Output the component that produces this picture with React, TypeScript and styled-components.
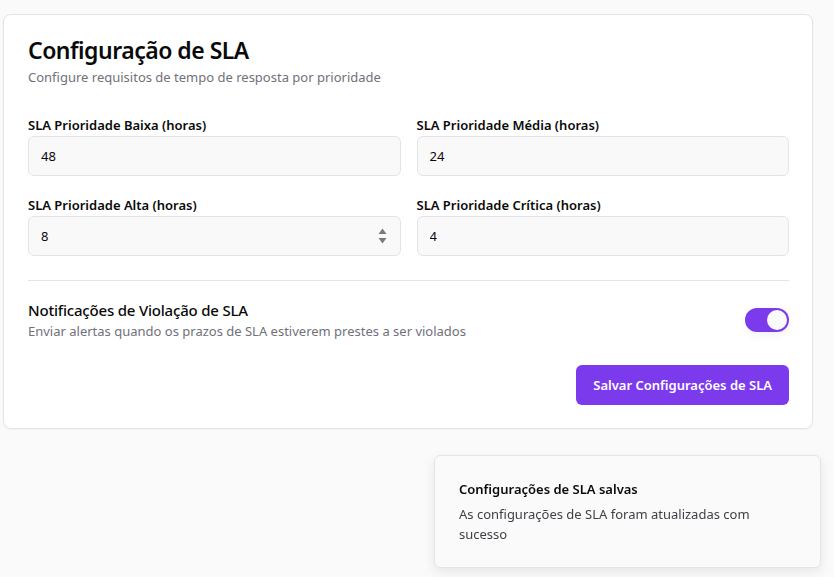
import React from "react";
import styled, { createGlobalStyle } from "styled-components";

const Global = createGlobalStyle`
  html, body { margin: 0; padding: 0; background: #fafafa; }
  body { font-family: "Noto Sans", "Open Sans", sans-serif; color: #0a0a0a; }
  * { box-sizing: border-box; }
`;

const Page = styled.div`
  padding: 14px 21px 0 3px;
  min-height: 577px;
`;

const Card = styled.section`
  background: #fff;
  border: 1px solid #e4e4e7;
  border-radius: 8px;
  box-shadow: 0 1px 2px rgba(0,0,0,0.04);
  padding: 19px 23px 23px 24px;
  display: flex;
  flex-direction: column;
`;

const Title = styled.h1`
  margin: 0;
  font-size: 23px;
  font-weight: 600;
  line-height: 32px;
  letter-spacing: -0.5px;
`;

const Subtitle = styled.p`
  margin: 2px 0 0;
  font-size: 13px;
  line-height: 18px;
  color: #71717a;
`;

const Grid = styled.div`
  display: grid;
  grid-template-columns: 1fr 1fr;
  column-gap: 16px;
  row-gap: 21px;
  margin-top: 31px;
`;

const Field = styled.div`
  display: flex;
  flex-direction: column;
  gap: 3px;
`;

const Label = styled.label`
  font-size: 13px;
  font-weight: 600;
  line-height: 16px;
`;

const InputWrap = styled.div`
  position: relative;
`;

const Input = styled.input`
  width: 100%;
  height: 40px;
  border: 1px solid #e4e4e7;
  border-radius: 6px;
  background: #f9f9fa;
  padding: 0 12px;
  font-family: inherit;
  font-size: 13px;
  color: #0a0a0a;
  outline: none;
`;

const Spinner = styled.svg`
  position: absolute;
  right: 14px;
  top: 50%;
  transform: translateY(-50%);
`;

const Divider = styled.hr`
  border: 0;
  border-top: 1px solid #e4e4e7;
  margin: 24px 0 19px;
`;

const Row = styled.div`
  display: flex;
  align-items: center;
  justify-content: space-between;
`;

const RowText = styled.div`
  display: flex;
  flex-direction: column;
`;

const RowTitle = styled.div`
  font-size: 15px;
  font-weight: 500;
  line-height: 20px;
  letter-spacing: -0.2px;
`;

const RowDesc = styled.div`
  font-size: 13px;
  line-height: 18px;
  color: #71717a;
  margin-top: 2px;
`;

const Toggle = styled.div<{ $on: boolean }>`
  width: 44px;
  height: 24px;
  border-radius: 12px;
  background: ${p => (p.$on ? "#7c3aed" : "#e4e4e7")};
  padding: 2px;
  display: flex;
  justify-content: ${p => (p.$on ? "flex-end" : "flex-start")};
  box-shadow: 0 3px 10px rgba(0,0,0,0.06);
`;

const Knob = styled.div`
  width: 20px;
  height: 20px;
  border-radius: 50%;
  background: #fafafa;
`;

const Actions = styled.div`
  display: flex;
  justify-content: flex-end;
  margin-top: 25px;
`;

const Button = styled.button`
  height: 40px;
  padding: 0 17px;
  border: 0;
  border-radius: 6px;
  background: #7c3aed;
  color: #fff;
  font-family: inherit;
  font-size: 13px;
  font-weight: 600;
`;

const Toast = styled.div`
  position: fixed;
  right: 13px;
  bottom: 9px;
  width: 387px;
  background: #fafafa;
  border: 1px solid #e4e4e7;
  border-radius: 6px;
  box-shadow: 0 4px 12px rgba(0,0,0,0.08);
  padding: 23px 40px 23px 24px;
`;

const ToastTitle = styled.div`
  font-size: 13px;
  font-weight: 600;
  line-height: 20px;
`;

const ToastDesc = styled.div`
  font-size: 13px;
  line-height: 20px;
  color: #3f3f46;
  margin-top: 5px;
`;

const fields = [
  { label: "SLA Prioridade Baixa (horas)", value: "48" },
  { label: "SLA Prioridade Média (horas)", value: "24" },
  { label: "SLA Prioridade Alta (horas)", value: "8", spin: true },
  { label: "SLA Prioridade Crítica (horas)", value: "4" },
];

export default function App() {
  return (
    <Page>
      <Global />
      <Card>
        <Title>Configuração de SLA</Title>
        <Subtitle>Configure requisitos de tempo de resposta por prioridade</Subtitle>
        <Grid>
          {fields.map(f => (
            <Field key={f.label}>
              <Label>{f.label}</Label>
              <InputWrap>
                <Input defaultValue={f.value} />
                {f.spin && (
                  <Spinner width="9" height="16" viewBox="0 0 9 16">
                    <path d="M4.5 0.5 L8.5 6 L0.5 6 Z" fill="#7a7a7a" />
                    <path d="M4.5 15.5 L8.5 10 L0.5 10 Z" fill="#7a7a7a" />
                  </Spinner>
                )}
              </InputWrap>
            </Field>
          ))}
        </Grid>
        <Divider />
        <Row>
          <RowText>
            <RowTitle>Notificações de Violação de SLA</RowTitle>
            <RowDesc>Enviar alertas quando os prazos de SLA estiverem prestes a ser violados</RowDesc>
          </RowText>
          <Toggle $on>
            <Knob />
          </Toggle>
        </Row>
        <Actions>
          <Button>Salvar Configurações de SLA</Button>
        </Actions>
      </Card>
      <Toast>
        <ToastTitle>Configurações de SLA salvas</ToastTitle>
        <ToastDesc>As configurações de SLA foram atualizadas com sucesso</ToastDesc>
      </Toast>
    </Page>
  );
}
